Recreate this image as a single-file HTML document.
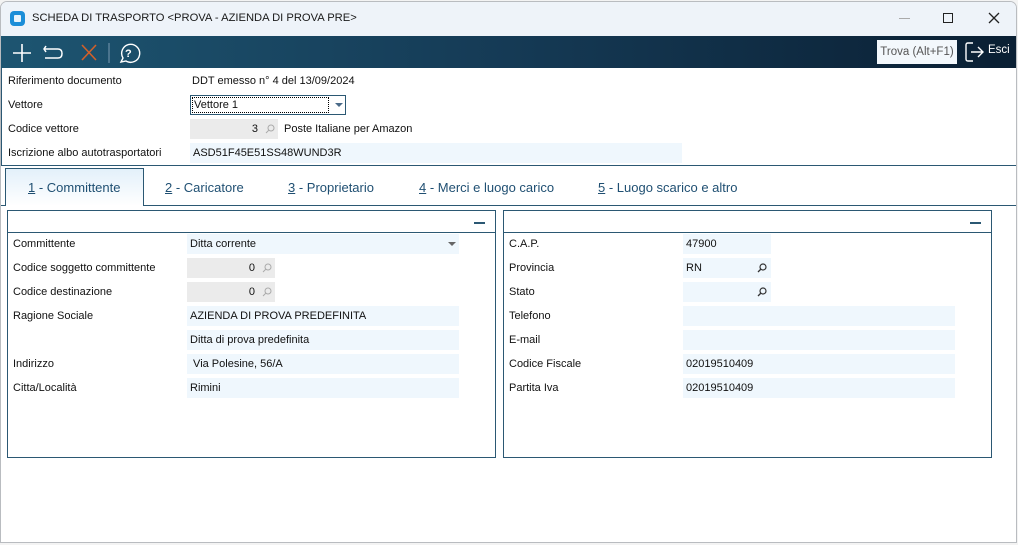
<!DOCTYPE html>
<html><head><meta charset="utf-8"><style>
*{margin:0;padding:0;box-sizing:border-box}
body{width:1018px;height:545px;background:#f3f3f3;font-family:"Liberation Sans",sans-serif;font-size:11px;color:#111;position:relative;overflow:hidden}
.a{position:absolute;white-space:nowrap}
.win{position:absolute;left:0;top:1px;width:1017px;height:542px;border:1px solid #b9bcc0;border-radius:7px 7px 0 0;background:#fff;overflow:hidden}
.f{position:absolute;height:20px;background:#eff7fd;line-height:20px;padding-left:3px}
.g{position:absolute;height:20px;background:#ebebeb;line-height:20px;text-align:right}
.lb{position:absolute;line-height:20px}
.panel{position:absolute;border:1px solid #2b5873;background:#fff}
.ph{position:absolute;left:0;right:0;top:0;height:22px;border-bottom:1px solid #2b5873}
.tab{position:absolute;top:178px;font-size:13px;color:#1f4f72}
.tab u{text-decoration:underline}
</style></head><body>
<div class="win">
 <div class="a" style="left:0;top:0;width:1016px;height:34px;background:#eef3f9"></div>
 <div class="a" style="left:9px;top:9px;width:15px;height:15px;background:#1b8ed8;border-radius:4px"><div style="position:absolute;left:4px;top:4px;width:7px;height:7px;background:#e8f4fc;border-radius:1px"></div></div>
 <div class="a" style="left:31px;top:10px;font-size:11.2px;color:#1a1a1a">SCHEDA DI TRASPORTO &lt;PROVA - AZIENDA DI PROVA PRE&gt;</div>
 <div class="a" style="left:898px;top:16px;width:11px;height:1px;background:#aaa"></div>
 <div class="a" style="left:942px;top:11px;width:10px;height:10px;border:1.3px solid #222"></div>
 <svg class="a" style="left:987px;top:10px" width="12" height="12"><path d="M1 1L11 11M11 1L1 11" stroke="#222" stroke-width="1.3"/></svg>
 <div class="a" style="left:0;top:34px;width:1016px;height:32px;background:linear-gradient(90deg,#1d5571 0%,#153a55 50%,#0a1f33 100%)"></div>
 <svg class="a" style="left:7px;top:39px" width="140" height="24">
  <path d="M5 12H23M14 3V21" stroke="#fff" stroke-width="1.6"/>
  <path d="M40 8H36M38 5L36 8L38 11M37 8H50Q54 8 54 12.5Q54 17 50 17H37" stroke="#fff" stroke-width="1.5" fill="none"/>
  <path d="M74 4L88 19M88 4L74 19" stroke="#d2602a" stroke-width="1.6"/>
  <path d="M101 2V22" stroke="#7a9ab0" stroke-width="1"/>
  <path d="M113 21L115 17A9 9 0 1 1 118 20Z" stroke="#fff" stroke-width="1.4" fill="none"/>
  <text x="117" y="16" fill="#fff" font-size="11" font-family="Liberation Sans" font-weight="bold">?</text>
 </svg>
 <div class="a" style="left:876px;top:38px;width:80px;height:24px;background:#f3f8fc;color:#555;font-size:11.5px;line-height:24px;text-align:center">Trova (Alt+F1)</div>
 <svg class="a" style="left:964px;top:40px" width="20" height="20"><path d="M8 1H3Q1 1 1 3V17Q1 19 3 19H8" stroke="#fff" stroke-width="1.4" fill="none"/><path d="M6 10H18M13 5L18 10L13 15" stroke="#fff" stroke-width="1.4" fill="none"/></svg>
 <div class="a" style="left:987px;top:42px;color:#fff;font-size:11.5px">Esci</div>
 <div class="a" style="left:0;top:66px;width:1016px;height:98px;border-bottom:1px solid #2b5873;border-left:1px solid #2b5873;border-right:1px solid #2b5873"></div>
 <div class="lb" style="left:7px;top:69px">Riferimento documento</div>
 <div class="lb" style="left:191px;top:69px">DDT emesso n° 4 del 13/09/2024</div>
 <div class="lb" style="left:7px;top:93px">Vettore</div>
 <div class="a" style="left:189px;top:93px;width:156px;height:20px;border:1px solid #2b5873;background:#fff"><div style="position:absolute;left:1px;top:1px;width:137px;height:16px;border:1px dotted #000;line-height:14px;padding-left:1px">Vettore 1</div><div style="position:absolute;left:144px;top:7px;border:4px solid transparent;border-top:4px solid #4a6a88"></div></div>
 <div class="lb" style="left:7px;top:117px">Codice vettore</div>
 <div class="g" style="left:189px;top:117px;width:88px;padding-right:20px">3</div>
 <svg class="a" style="left:264px;top:122px" width="10" height="10"><circle cx="6" cy="4" r="3" stroke="#aaa" fill="none"/><path d="M4 6L1 9" stroke="#aaa"/></svg>
 <div class="lb" style="left:283px;top:117px">Poste Italiane per Amazon</div>
 <div class="lb" style="left:7px;top:141px">Iscrizione albo autotrasportatori</div>
 <div class="f" style="left:189px;top:141px;width:492px">ASD51F45E51SS48WUND3R</div>
 <div class="a" style="left:4px;top:166px;width:139px;height:38px;border:1px solid #2b5873;border-bottom:none;background:linear-gradient(#e3f0fa,#fff);z-index:2"></div>
 <div class="a" style="left:142px;top:203px;width:874px;height:1px;background:#2b5873"></div>
 <div class="a" style="left:0;top:203px;width:5px;height:1px;background:#2b5873"></div>
 <div class="tab" style="left:27px;z-index:3"><u>1</u> - Committente</div>
 <div class="tab" style="left:164px"><u>2</u> - Caricatore</div>
 <div class="tab" style="left:287px"><u>3</u> - Proprietario</div>
 <div class="tab" style="left:418px"><u>4</u> - Merci e luogo carico</div>
 <div class="tab" style="left:597px"><u>5</u> - Luogo scarico e altro</div>

 <div class="panel" style="left:6px;top:208px;width:489px;height:248px"><div class="ph"><div style="position:absolute;right:10px;top:11px;width:11px;height:1.5px;background:#2b5873"></div></div></div>
 <div class="lb" style="left:12px;top:232px">Committente</div>
 <div class="f" style="left:186px;top:232px;width:272px">Ditta corrente<div style="position:absolute;right:3px;top:8px;border:4px solid transparent;border-top:4px solid #666"></div></div>
 <div class="lb" style="left:12px;top:256px">Codice soggetto committente</div>
 <div class="g" style="left:186px;top:256px;width:88px;padding-right:20px">0</div>
 <svg class="a" style="left:261px;top:261px" width="10" height="10"><circle cx="6" cy="4" r="3" stroke="#aaa" fill="none"/><path d="M4 6L1 9" stroke="#aaa"/></svg>
 <div class="lb" style="left:12px;top:280px">Codice destinazione</div>
 <div class="g" style="left:186px;top:280px;width:88px;padding-right:20px">0</div>
 <svg class="a" style="left:261px;top:285px" width="10" height="10"><circle cx="6" cy="4" r="3" stroke="#aaa" fill="none"/><path d="M4 6L1 9" stroke="#aaa"/></svg>
 <div class="lb" style="left:12px;top:304px">Ragione Sociale</div>
 <div class="f" style="left:186px;top:304px;width:272px">AZIENDA DI PROVA PREDEFINITA</div>
 <div class="f" style="left:186px;top:328px;width:272px">Ditta di prova predefinita</div>
 <div class="lb" style="left:12px;top:352px">Indirizzo</div>
 <div class="f" style="left:186px;top:352px;width:272px">&nbsp;Via Polesine, 56/A</div>
 <div class="lb" style="left:12px;top:376px">Citta/Località</div>
 <div class="f" style="left:186px;top:376px;width:272px">Rimini</div>

 <div class="panel" style="left:502px;top:208px;width:489px;height:248px"><div class="ph"><div style="position:absolute;right:10px;top:11px;width:11px;height:1.5px;background:#2b5873"></div></div></div>
 <div class="lb" style="left:508px;top:232px">C.A.P.</div>
 <div class="f" style="left:682px;top:232px;width:88px">47900</div>
 <div class="lb" style="left:508px;top:256px">Provincia</div>
 <div class="f" style="left:682px;top:256px;width:88px">RN</div>
 <svg class="a" style="left:756px;top:261px" width="10" height="10"><circle cx="6" cy="4" r="3" stroke="#333" fill="none" stroke-width="1.2"/><path d="M4 6L1 9" stroke="#333" stroke-width="1.3"/></svg>
 <div class="lb" style="left:508px;top:280px">Stato</div>
 <div class="f" style="left:682px;top:280px;width:88px"></div>
 <svg class="a" style="left:756px;top:285px" width="10" height="10"><circle cx="6" cy="4" r="3" stroke="#333" fill="none" stroke-width="1.2"/><path d="M4 6L1 9" stroke="#333" stroke-width="1.3"/></svg>
 <div class="lb" style="left:508px;top:304px">Telefono</div>
 <div class="f" style="left:682px;top:304px;width:272px"></div>
 <div class="lb" style="left:508px;top:328px">E-mail</div>
 <div class="f" style="left:682px;top:328px;width:272px"></div>
 <div class="lb" style="left:508px;top:352px">Codice Fiscale</div>
 <div class="f" style="left:682px;top:352px;width:272px">02019510409</div>
 <div class="lb" style="left:508px;top:376px">Partita Iva</div>
 <div class="f" style="left:682px;top:376px;width:272px">02019510409</div>
</div>
</body></html>
